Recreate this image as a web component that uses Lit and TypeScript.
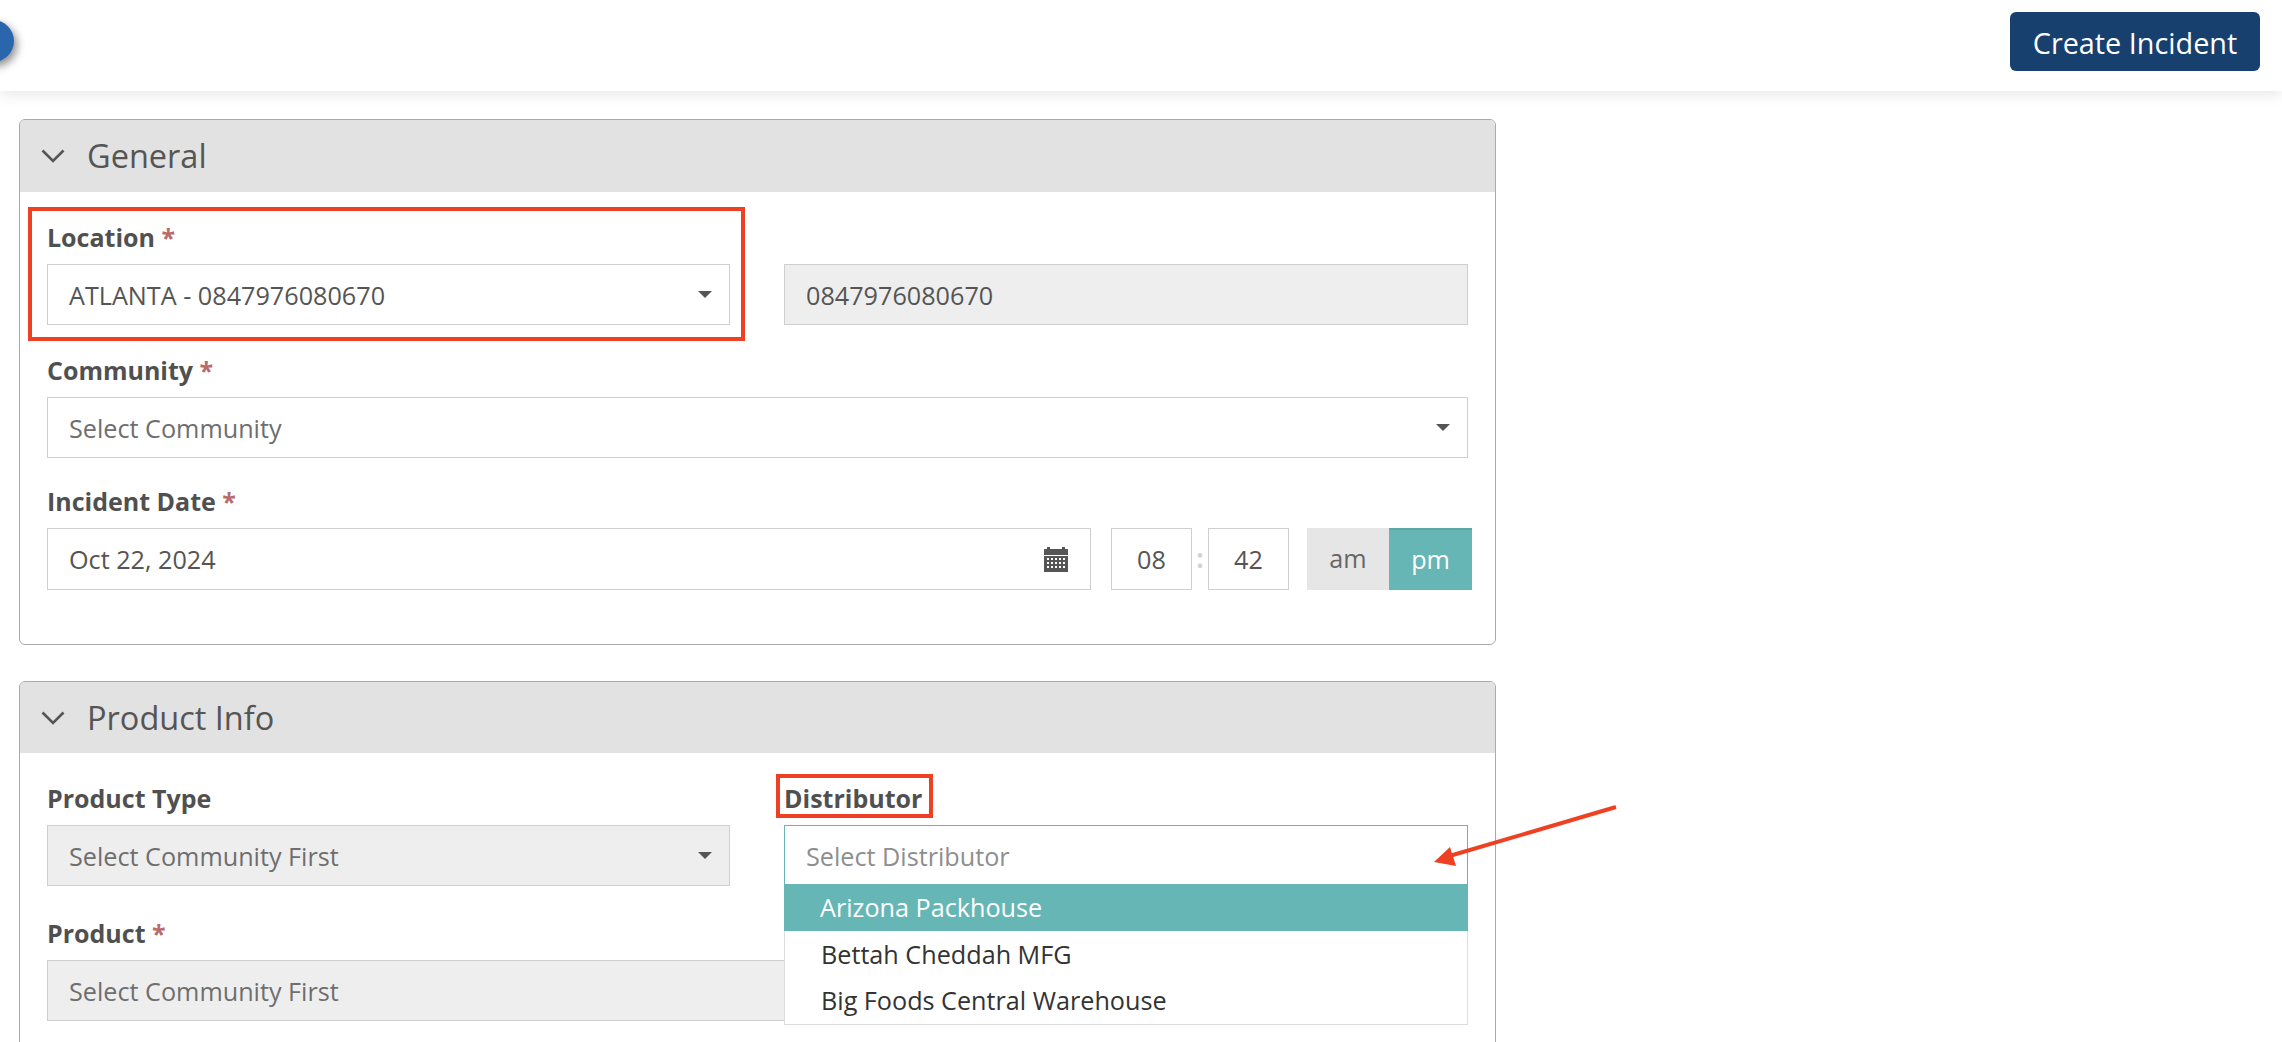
import { LitElement, html, css, svg } from "lit";
import { customElement } from "lit/decorators.js";

const caret = svg`<svg class="caret" viewBox="0 0 14 7" width="14" height="7"><path d="M0 0h14L7 7z" fill="#555"/></svg>`;
const chevron = svg`<svg class="chev" viewBox="0 0 24 14" width="24" height="14"><path d="M1.5 1.5 12 12 22.5 1.5" fill="none" stroke="#555" stroke-width="2.6"/></svg>`;
const calendar = svg`<svg class="cal" viewBox="0 0 24 26" width="24" height="26"><path fill="#555" fill-rule="evenodd" d="M3 1h3v2h12V1h3v2h3v6H0V3h3zM0 10h24v16H0zM3 12v2h2v-2zm4 0v2h2v-2zm4 0v2h2v-2zm4 0v2h2v-2zm4 0v2h2v-2zM3 16v2h2v-2zm4 0v2h2v-2zm4 0v2h2v-2zm4 0v2h2v-2zm4 0v2h2v-2zM3 20v2h2v-2zm4 0v2h2v-2zm4 0v2h2v-2zm4 0v2h2v-2zm4 0v2h2v-2z"/></svg>`;

@customElement("app-root")
export class AppRoot extends LitElement {
  static styles = css`
    :host { display: block; position: relative; height: 1042px; overflow: hidden; background: #fff; font-family: "Open Sans", sans-serif; color: #555; font-size: 25.2px; }
    * { box-sizing: border-box; }
    .top { height: 91px; background: #fff; box-shadow: 0 3px 14px rgba(0,0,0,.10); display: flex; align-items: flex-start; justify-content: flex-end; padding: 12px 22px 0 0; position: relative; overflow: visible; }
    .dot { position: absolute; left: -28px; top: 20px; width: 42px; height: 42px; border-radius: 50%; background: #2a66ae; box-shadow: 3px 4px 8px rgba(0,0,0,.45); }
    .btn { width: 250px; height: 59px; border-radius: 6px; background: #17406f; color: #fff; display: flex; align-items: center; justify-content: center; font-size: 28.8px; padding-top: 2px; }
    main { padding: 28px 0 0 19px; width: 1496px; display: flex; flex-direction: column; gap: 36px; }
    .panel { border: 1px solid #aaa; border-radius: 6px; overflow: visible; }
    .panel.general { height: 526px; }
    .panel.product { height: 600px; }
    .phead { height: 72px; background: #e2e2e2; border-radius: 5px 5px 0 0; display: flex; align-items: center; padding-left: 21px; gap: 22px; font-size: 32.5px; color: #555; }
    .general .phead span { padding-bottom: 2px; }
    .product .phead { height: 71px; }
    .pbody { padding: 30px 27px 0; display: flex; flex-direction: column; }
    .row { display: grid; grid-template-columns: 683px 684px; column-gap: 54px; }
    .row.one { grid-template-columns: 1fr; }
    .gap1 { margin-top: 30px; }
    .gap2 { margin-top: 28px; }
    .gap3 { margin-top: 32px; }
    .label { height: 32px; line-height: 31px; margin-bottom: 10px; font-weight: 700; font-size: 25px; color: #505050; white-space: nowrap; }
    .req { color: #b96a6a; }
    .input { height: 61px; border: 1.5px solid #cfcfcf; background: #fff; display: flex; align-items: center; justify-content: space-between; padding: 0 21px; font-size: 25.2px; color: #555; white-space: nowrap; }
    .input.off { background: #eee; color: #6e6e6e; }
    .input.off.val { color: #555; }
    .input.ph { color: #6e6e6e; }
    .caret { flex: none; margin-right: -4px; margin-top: -1px; }
    .field { position: relative; min-width: 0; }
    .open { height: 60px; border: 1px solid #66b6b6; color: #8e8e8e; z-index: 3; position: relative; padding-top: 2px; }
    .menu { position: absolute; left: 0; right: 0; top: 101px; background: #fff; border: 1.5px solid #ddd; border-top: 0; z-index: 2; }
    .opt { height: 46.6px; display: flex; align-items: center; padding-left: 36px; color: #333; font-size: 25.2px; }
    .opt.hot { background: #66b6b6; color: #fff; margin: 0 -1px; }
    .datetime { display: flex; align-items: stretch; height: 62px; margin-right: -4px; }
    .date { flex: 1; height: 62px; }
    .cal { margin-right: 1px; flex: none; }
    .t { width: 81px; height: 62px; border: 1.5px solid #cfcfcf; display: flex; align-items: center; justify-content: center; font-size: 25.2px; color: #555; }
    .t.h { margin-left: 20px; }
    .colon { width: 16px; display: flex; align-items: center; justify-content: center; color: #d2d2d2; font-weight: 700; font-size: 26px; padding-bottom: 2px; }
    .am, .pm { width: 82px; height: 62px; display: flex; align-items: center; justify-content: center; font-size: 25.2px; padding-bottom: 3px; }
    .am { margin-left: 18px; background: #e6e6e6; color: #666; }
    .pm { width: 83px; background: #66b6b6; color: #fff; border-top: 2px solid #5ca6a4; }
    .mark { position: absolute; border: 4px solid #ee4123; z-index: 5; pointer-events: none; }
    .mark.loc { left: 28px; top: 207px; width: 717px; height: 134px; }
    .mark.dist { left: 776px; top: 774px; width: 157px; height: 44px; }
    .arrow { position: absolute; left: 1420px; top: 790px; z-index: 6; }
  `;

  private label(text: string, req = false) {
    return html`<div class="label">${text}${req ? html` <span class="req">*</span>` : ""}</div>`;
  }

  render() {
    return html`
      <div class="top"><div class="dot"></div><div class="btn">Create Incident</div></div>
      <main>
        <section class="panel general">
          <div class="phead">${chevron}<span>General</span></div>
          <div class="pbody">
            <div class="row">
              <div class="field">${this.label("Location", true)}<div class="input"><span>ATLANTA - 0847976080670</span>${caret}</div></div>
              <div class="field"><div class="label"></div><div class="input off val"><span>0847976080670</span></div></div>
            </div>
            <div class="row one gap1">
              <div class="field">${this.label("Community", true)}<div class="input ph"><span>Select Community</span>${caret}</div></div>
            </div>
            <div class="row one gap2">
              <div class="field">${this.label("Incident Date", true)}
                <div class="datetime">
                  <div class="input date"><span>Oct 22, 2024</span>${calendar}</div>
                  <div class="t h">08</div><div class="colon">:</div><div class="t">42</div>
                  <div class="am">am</div><div class="pm">pm</div>
                </div>
              </div>
            </div>
          </div>
        </section>
        <section class="panel product">
          <div class="phead">${chevron}<span>Product Info</span></div>
          <div class="pbody">
            <div class="row">
              <div class="field">${this.label("Product Type")}<div class="input off"><span>Select Community First</span>${caret}</div></div>
              <div class="field">${this.label("Distributor")}
                <div class="input open"><span>Select Distributor</span></div>
                <div class="menu">
                  <div class="opt hot">Arizona Packhouse</div>
                  <div class="opt">Bettah Cheddah MFG</div>
                  <div class="opt">Big Foods Central Warehouse</div>
                </div>
              </div>
            </div>
            <div class="row one gap3">
              <div class="field">${this.label("Product", true)}<div class="input off"><span>Select Community First</span></div></div>
            </div>
          </div>
        </section>
      </main>
      <div class="mark loc"></div>
      <div class="mark dist"></div>
      <svg class="arrow" width="200" height="80" viewBox="1420 790 200 80">
        <path d="M1616 807 1446 857" stroke="#ee4123" stroke-width="4" fill="none"/>
        <path d="M1434 862 1450 847 1456 866z" fill="#ee4123"/>
      </svg>
    `;
  }
}
